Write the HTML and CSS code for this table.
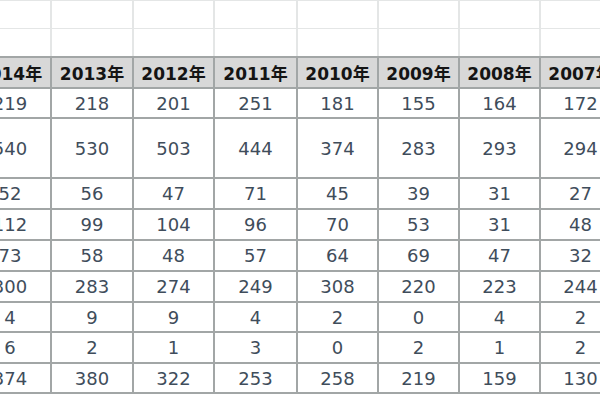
FILE: index.html
```html
<!DOCTYPE html>
<html lang="ja">
<head>
<meta charset="utf-8">
<title>年別データ</title>
<link rel="stylesheet" href="styles.css">
</head>
<body>
<div class="sheet">
  <div class="blank">
    <div></div><div></div><div></div><div></div><div></div><div></div><div></div><div></div>
    <div></div><div></div><div></div><div></div><div></div><div></div><div></div><div></div>
  </div>
  <div class="table">
    <div class="h">2014年</div><div class="h">2013年</div><div class="h">2012年</div><div class="h">2011年</div><div class="h">2010年</div><div class="h">2009年</div><div class="h">2008年</div><div class="h">2007年</div>
    <div>219</div><div>218</div><div>201</div><div>251</div><div>181</div><div>155</div><div>164</div><div>172</div>
    <div>540</div><div>530</div><div>503</div><div>444</div><div>374</div><div>283</div><div>293</div><div>294</div>
    <div>52</div><div>56</div><div>47</div><div>71</div><div>45</div><div>39</div><div>31</div><div>27</div>
    <div>112</div><div>99</div><div>104</div><div>96</div><div>70</div><div>53</div><div>31</div><div>48</div>
    <div>73</div><div>58</div><div>48</div><div>57</div><div>64</div><div>69</div><div>47</div><div>32</div>
    <div>300</div><div>283</div><div>274</div><div>249</div><div>308</div><div>220</div><div>223</div><div>244</div>
    <div>4</div><div>9</div><div>9</div><div>4</div><div>2</div><div>0</div><div>4</div><div>2</div>
    <div>6</div><div>2</div><div>1</div><div>3</div><div>0</div><div>2</div><div>1</div><div>2</div>
    <div>374</div><div>380</div><div>322</div><div>253</div><div>258</div><div>219</div><div>159</div><div>130</div>
  </div>
</div>
</body>
</html>
```
FILE: styles.css
```css
html, body {
  margin: 0;
  padding: 0;
  overflow: hidden;
  background: #ffffff;
}
.sheet {
  width: 660px;
  margin-left: -32px;
  font-family: "DejaVu Sans", "Noto Sans CJK JP", sans-serif;
}
.blank {
  display: grid;
  grid-template-columns: 80px 80px 79px 81px 79px 79px 79px 79px;
  grid-template-rows: 27px 27px;
  column-gap: 2px;
  row-gap: 1px;
  padding: 1px 0 0 2px;
  background: #e4e6e6;
  width: max-content;
}
.blank div {
  background: #ffffff;
}
.table {
  display: grid;
  grid-template-columns: 80px 80px 79px 81px 79px 79px 79px 79px;
  grid-template-rows: 29px 28px 58px 29px 29px 29px 29px 28px 29px 28px;
  gap: 2px;
  padding: 2px;
  padding-right: 0;
  background: #a2a6a6;
  width: max-content;
}
.table div {
  background: #ffffff;
  display: flex;
  align-items: center;
  justify-content: center;
  font-size: 18px;
  color: #3f4d5b;
  white-space: nowrap;
  overflow: hidden;
}
.table .h {
  background: #d8d8d8;
  color: #141414;
  font-weight: bold;
  font-size: 17px;
}
```
